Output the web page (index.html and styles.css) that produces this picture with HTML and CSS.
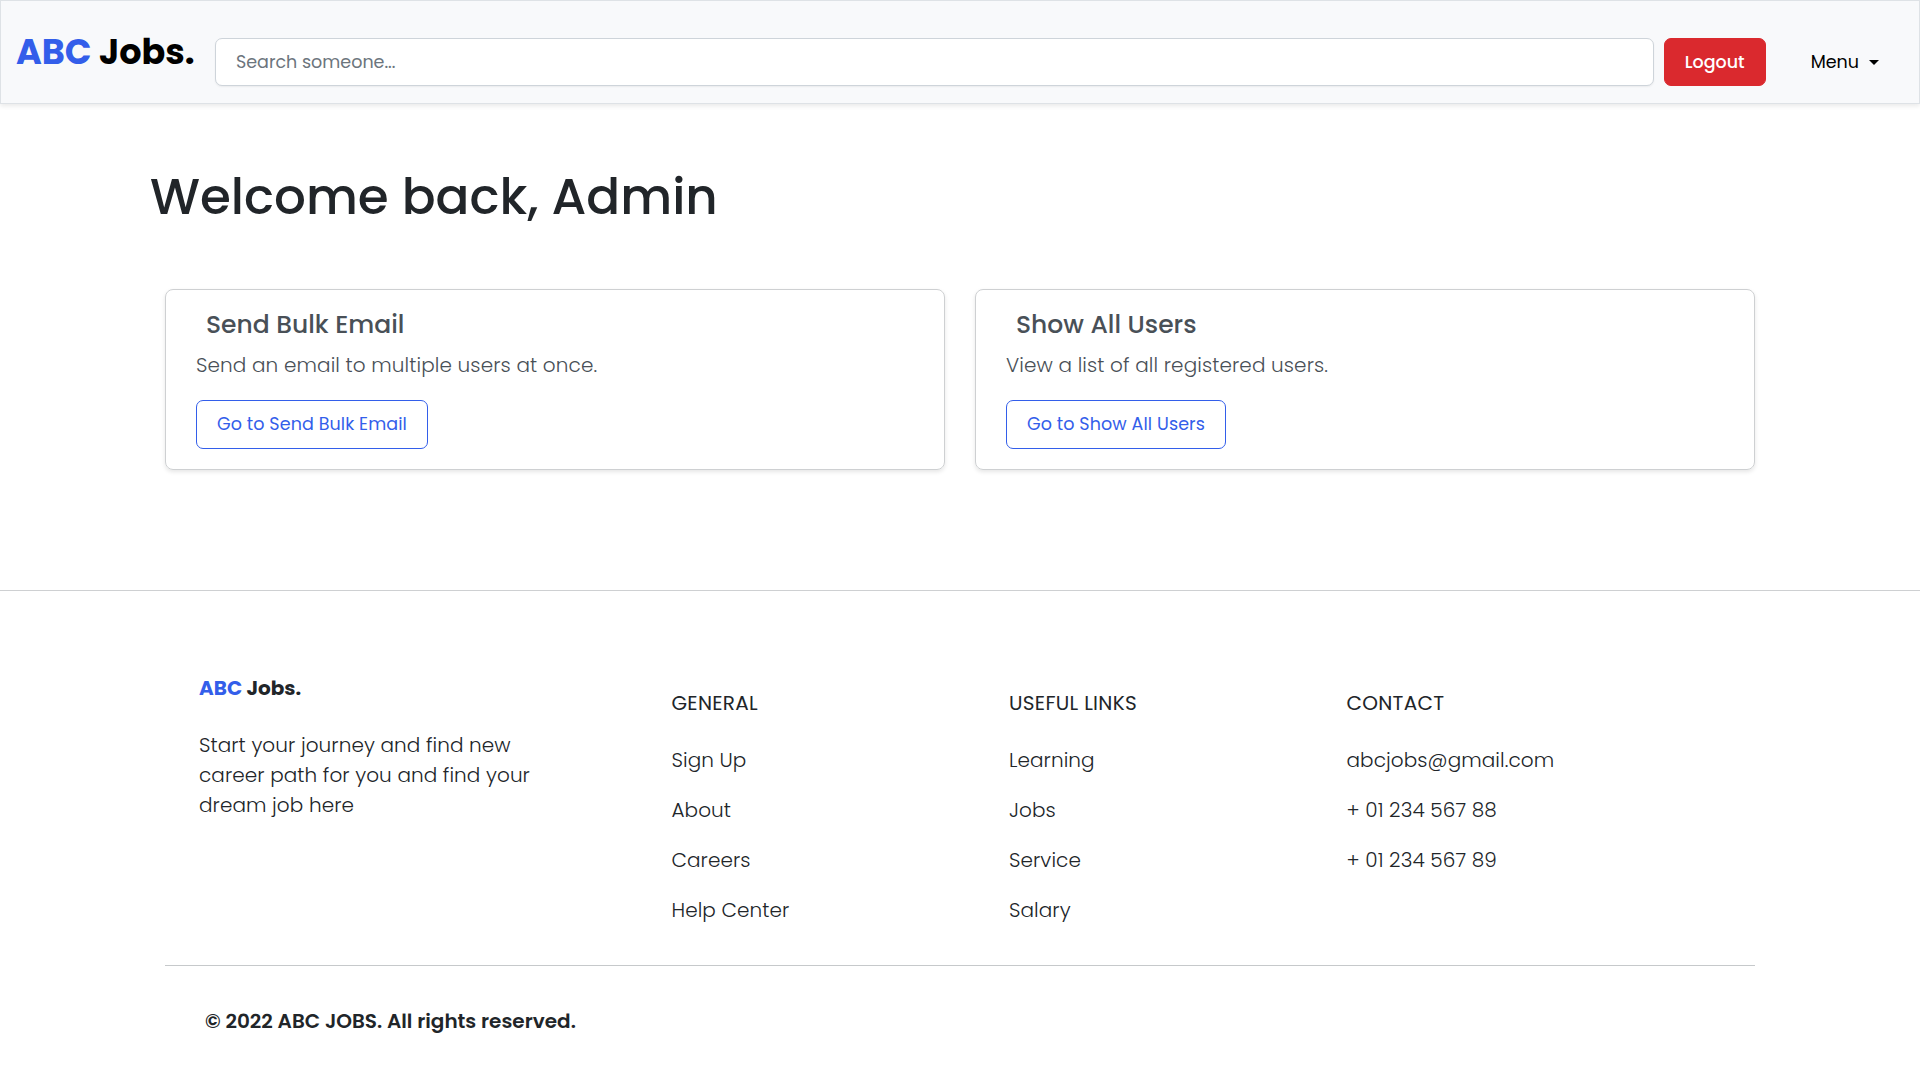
FILE: index.html
```html
<!DOCTYPE html>
<html lang="en">
<head>
<meta charset="utf-8">
<title>ABC Jobs</title>
<link rel="stylesheet" href="styles.css">
</head>
<body>
<header class="navbar">
  <a class="logo" href="#"><span class="accent">ABC</span> Jobs.</a>
  <form class="search">
    <input class="search-input" type="text" placeholder="Search someone...">
    <button class="btn btn-danger" type="button">Logout</button>
  </form>
  <a class="menu" href="#">Menu<span class="caret"></span></a>
</header>
<main class="main">
  <h1 class="welcome">Welcome back, Admin</h1>
  <div class="cards">
    <section class="card">
      <h2 class="card-title">Send Bulk Email</h2>
      <p class="card-text">Send an email to multiple users at once.</p>
      <a class="btn btn-outline" href="#">Go to Send Bulk Email</a>
    </section>
    <section class="card">
      <h2 class="card-title">Show All Users</h2>
      <p class="card-text">View a list of all registered users.</p>
      <a class="btn btn-outline" href="#">Go to Show All Users</a>
    </section>
  </div>
</main>
<footer class="footer">
  <div class="footer-columns">
    <div class="about">
      <h3 class="footer-logo"><span class="accent">ABC</span> Jobs.</h3>
      <p class="about-text">Start your journey and find new career path for you and find your dream job here</p>
    </div>
    <div class="column">
      <h4 class="column-title">GENERAL</h4>
      <a href="#">Sign Up</a>
      <a href="#">About</a>
      <a href="#">Careers</a>
      <a href="#">Help Center</a>
    </div>
    <div class="column">
      <h4 class="column-title">USEFUL LINKS</h4>
      <a href="#">Learning</a>
      <a href="#">Jobs</a>
      <a href="#">Service</a>
      <a href="#">Salary</a>
    </div>
    <div class="column">
      <h4 class="column-title">CONTACT</h4>
      <a href="#">abcjobs@gmail.com</a>
      <a href="#">+ 01 234 567 88</a>
      <a href="#">+ 01 234 567 89</a>
    </div>
  </div>
  <p class="copyright">© 2022 ABC JOBS. All rights reserved.</p>
</footer>
</body>
</html>
```
FILE: styles.css
```css
* { box-sizing: border-box; }

body {
  margin: 0;
  background: #fff;
  color: #212529;
  font: 300 20px/30px Poppins, Inter, sans-serif;
}

h1, h2, h3, h4, p { margin: 0; }
a { color: inherit; text-decoration: none; }
.accent { color: #335eea; }

.navbar {
  display: flex;
  align-items: flex-start;
  height: 104px;
  padding: 37px 40px 0 15px;
  background: #f8f9fb;
  border: 1px solid #dee2e6;
  box-shadow: 0 2px 5px rgba(0, 0, 0, 0.09);
}

.logo {
  width: 199px;
  margin-top: -12px;
  color: #000;
  font-size: 35px;
  font-weight: 700;
  line-height: 52px;
  white-space: nowrap;
}

.search { display: flex; flex: 1; gap: 10px; }

.search-input {
  flex: 1;
  min-width: 0;
  height: 48px;
  padding: 0 20px;
  background: #fff;
  border: 1px solid #ced4da;
  border-radius: 7px;
  box-shadow: 0 1px 2px rgba(0, 0, 0, 0.06);
  font: 400 17.5px/26px Poppins, Inter, sans-serif;
}
.search-input::placeholder { color: #6c757d; opacity: 1; }

.btn {
  display: inline-block;
  border: 1px solid;
  border-radius: 7px;
  font: 400 17.5px/27px Poppins, Inter, sans-serif;
  white-space: nowrap;
}
.btn-danger {
  width: 102px;
  height: 48px;
  padding: 0;
  background: #da292e;
  border-color: #da292e;
  color: #fff;
  font-weight: 500;
}
.btn-outline {
  padding: 10px 20px;
  border-color: #335eea;
  color: #335eea;
  letter-spacing: 0.1px;
}

.menu {
  display: flex;
  align-items: center;
  height: 48px;
  margin-left: 45px;
  color: #000;
  font-size: 17.5px;
  font-weight: 400;
}
.caret {
  margin-left: 10px;
  border: 5px solid transparent;
  border-top-color: #000;
  border-bottom: 0;
}

.main { width: 1620px; margin: 0 auto; padding: 63px 0 120px; }

.welcome {
  font-size: 50px;
  font-weight: 500;
  line-height: 60px;
}

.cards {
  display: grid;
  grid-template-columns: 1fr 1fr;
  gap: 30px;
  padding: 62px 15px 0;
}
.card {
  height: 181px;
  padding: 20px 30px;
  border: 1px solid #ced0d2;
  border-radius: 8px;
  box-shadow: 0 2px 4px rgba(0, 0, 0, 0.1);
  color: #495057;
}
.card-title {
  margin: 0 0 10px 10px;
  font-size: 25px;
  font-weight: 500;
  line-height: 30px;
}
.card-text { margin-bottom: 20px; letter-spacing: 0.1px; }

.footer { padding: 82px 165px 0; border-top: 1px solid #ced0d2; }

.footer-columns {
  display: grid;
  grid-template-columns: 472.5px 337.5px 337.5px 1fr;
  height: 293px;
  padding-left: 34px;
  border-bottom: 1px solid #c6c9cb;
}
.footer-logo {
  margin-bottom: 27px;
  font-size: 20px;
  font-weight: 700;
  line-height: 30px;
}
.about-text { width: 340px; letter-spacing: 0.08px; }

.column {
  display: flex;
  flex-direction: column;
  gap: 20px;
  padding-top: 15px;
  letter-spacing: 0.08px;
}
.column-title {
  margin-bottom: 7px;
  font-size: 20px;
  font-weight: 400;
  line-height: 30px;
  letter-spacing: 0.3px;
}

.copyright { padding: 40px 0 0 40px; font-weight: 600; }
```
